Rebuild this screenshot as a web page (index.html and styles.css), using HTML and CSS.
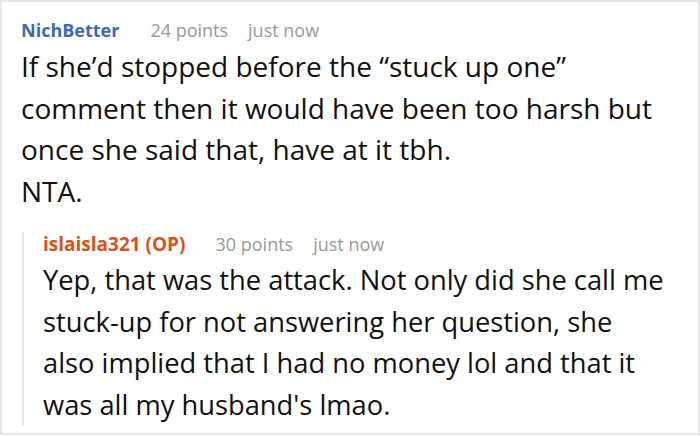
FILE: index.html
```html
<!DOCTYPE html>
<html>
<head>
<meta charset="utf-8">
<link rel="stylesheet" href="styles.css">
</head>
<body>
<div class="card">
  <div class="comment">
    <div class="meta">
      <span class="author">NichBetter</span>
      <span class="points">24 points</span>
      <span class="time">just now</span>
    </div>
    <div class="body">If she’d stopped before the “stuck up one” comment then it would have been too harsh but once she said that, have at it tbh.<br>NTA.</div>
  </div>
  <div class="reply">
    <div class="meta">
      <span class="author op">islaisla321 (OP)</span>
      <span class="points">30 points</span>
      <span class="time">just now</span>
    </div>
    <div class="body">Yep, that was the attack. Not only did she call me stuck-up for not answering her question, she also implied that I had no money lol and that it was all my husband's lmao.</div>
  </div>
</div>
</body>
</html>
```
FILE: styles.css
```css
html, body {
  margin: 0;
  padding: 0;
  background: #fff;
}
.card {
  width: 700px;
  height: 435px;
  box-sizing: border-box;
  border: 2px solid #e6e6e6;
  padding: 16px 20px 0 19px;
  font-family: "Open Sans", "Noto Sans", sans-serif;
  color: #111;
  overflow: hidden;
}
.meta {
  display: flex;
  align-items: baseline;
  font-size: 18px;
  line-height: 24px;
  color: #999;
}
.author {
  font-weight: 700;
  color: #3a6ab8;
  margin-right: 31px;
}
.author.op {
  color: #d5521c;
  font-size: 19px;
  margin-right: 30px;
}
.points {
  margin-right: 20px;
}
.body {
  font-size: 28px;
  line-height: 41.5px;
  margin-top: 4px;
}
.reply {
  margin-top: 32px;
  margin-left: 1px;
  margin-right: 10px;
  border-left: 2px solid #e6e6e6;
  padding-left: 19px;
}
.reply .meta {
  margin-top: -12px;
}
.reply .body {
  font-size: 27.3px;
  margin-top: 3px;
  margin-bottom: -6px;
}
```
